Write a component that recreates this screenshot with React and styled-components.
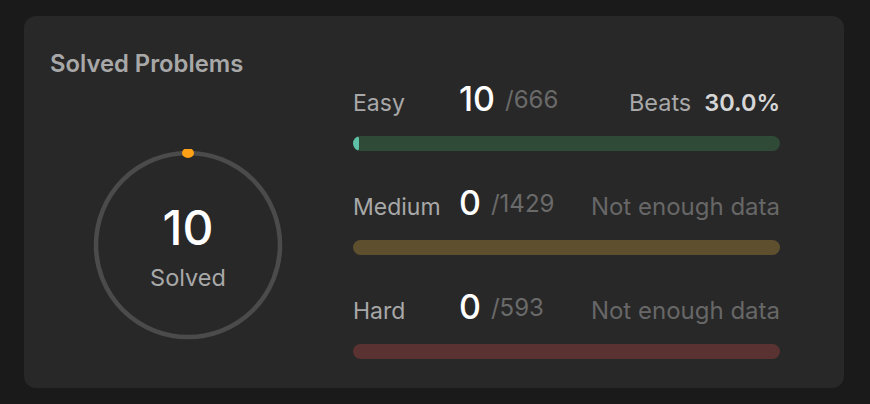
import React from "react";
import styled, { createGlobalStyle } from "styled-components";

const GlobalStyle = createGlobalStyle`
  html, body {
    margin: 0;
    padding: 0;
    background: #1a1a1a;
  }
  body {
    font-family: Inter, "Noto Sans", "Liberation Sans", sans-serif;
  }
`;

const rows = [
  { label: "Easy", solved: 10, total: 666, fill: "#5ec0a6", track: "#2f4a37", beats: "30.0%" },
  { label: "Medium", solved: 0, total: 1429, fill: "#ffc01e", track: "#5e4f2f" },
  { label: "Hard", solved: 0, total: 593, fill: "#ef4743", track: "#5a3232" },
];

const Page = styled.div`
  padding: 16px 26px 16px 24px;
`;

const Card = styled.section`
  width: 820px;
  height: 372px;
  box-sizing: border-box;
  padding: 34px 64px 28px 26px;
  background: #282828;
  border-radius: 12px;
  display: flex;
  gap: 27px;
`;

const Left = styled.div`
  width: 276px;
  display: flex;
  flex-direction: column;
  align-items: stretch;
`;

const Title = styled.h2`
  margin: 0;
  font-size: 23.8px;
  line-height: 28px;
  font-weight: 600;
  color: #a8a8a8;
`;

const Ring = styled.div`
  position: relative;
  width: 192px;
  height: 192px;
  margin: 71px auto 0;
`;

const RingText = styled.div`
  position: absolute;
  inset: 0;
  display: flex;
  flex-direction: column;
  align-items: center;
  padding-top: 55px;
`;

const BigCount = styled.div`
  font-size: 48px;
  line-height: 48px;
  font-weight: 500;
  color: #ffffff;
`;

const SolvedLabel = styled.div`
  margin-top: 12px;
  font-size: 23.5px;
  line-height: 28px;
  color: #a8a8a8;
`;

const Right = styled.div`
  width: 427px;
  padding-top: 28px;
  display: flex;
  flex-direction: column;
  gap: 31px;
`;

const Row = styled.div`
  display: flex;
  flex-direction: column;
  gap: 26px;
`;

const Header = styled.div`
  height: 32px;
  display: flex;
  align-items: baseline;
  white-space: nowrap;
`;

const Label = styled.span`
  width: 106px;
  font-size: 23px;
  color: #a8a8a8;
`;

const Count = styled.span`
  font-size: 34px;
  font-weight: 500;
  color: #ffffff;
  margin-right: 10px;
`;

const Total = styled.span`
  font-size: 24px;
  color: #6a6a6a;
  transform: translateY(-3px);
`;

const Aside = styled.span`
  margin-left: auto;
  font-size: ${(p) => (p.muted ? "24px" : "23.5px")};
  color: ${(p) => (p.muted ? "#676767" : "#a8a8a8")};
  display: flex;
  align-items: baseline;
  gap: 13px;

  b {
    font-weight: 600;
    color: #d6d6d6;
  }
`;

const Track = styled.div`
  height: 15px;
  border-radius: 8px;
  background: ${(p) => p.track};
  overflow: hidden;
`;

const Fill = styled.div`
  height: 100%;
  border-radius: 8px;
  background: ${(p) => p.fill};
`;

const ProgressRing = () => (
  <svg width="192" height="192" viewBox="0 0 192 192">
    <circle cx="96" cy="96" r="92" fill="none" stroke="#4b4b4b" strokeWidth="4.5" />
    <ellipse cx="96" cy="4" rx="6" ry="5" fill="#ffa116" />
  </svg>
);

export default function App() {
  return (
    <Page>
      <GlobalStyle />
      <Card>
        <Left>
          <Title>Solved Problems</Title>
          <Ring>
            <ProgressRing />
            <RingText>
              <BigCount>10</BigCount>
              <SolvedLabel>Solved</SolvedLabel>
            </RingText>
          </Ring>
        </Left>
        <Right>
          {rows.map((r) => (
            <Row key={r.label}>
              <Header>
                <Label>{r.label}</Label>
                <Count>{r.solved}</Count>
                <Total>/{r.total}</Total>
                {r.beats ? (
                  <Aside>
                    Beats <b>{r.beats}</b>
                  </Aside>
                ) : (
                  <Aside muted>Not enough data</Aside>
                )}
              </Header>
              <Track track={r.track}>
                <Fill fill={r.fill} style={{ width: `${(r.solved / r.total) * 100}%` }} />
              </Track>
            </Row>
          ))}
        </Right>
      </Card>
    </Page>
  );
}
